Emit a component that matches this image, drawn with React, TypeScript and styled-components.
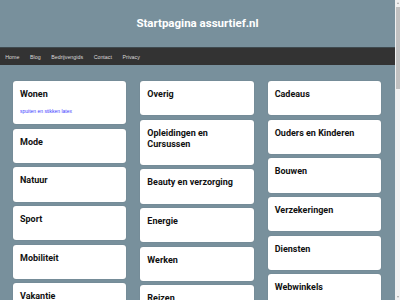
import React from 'react';
import styled, { createGlobalStyle } from 'styled-components';

const GlobalStyle = createGlobalStyle`
    body {
        margin: 0;
        padding-right: 5px;
        background: #78909c;
        font-family: Roboto, "Liberation Sans", Arial, sans-serif;
    }
`;

// nagebootste scrollbalk rechts (headless toont er geen)
const ScrollTrack = styled.div`
    position: fixed;
    top: 0;
    right: 0;
    width: 5px;
    height: 100vh;
    background: #f1f1f1;
    display: flex;
    flex-direction: column;
    align-items: center;
`;

const ScrollArrow = styled.div<{ $down?: boolean }>`
    width: 0;
    height: 0;
    margin: 2px 0;
    border-left: 1.5px solid transparent;
    border-right: 1.5px solid transparent;
    ${({ $down }) => ($down ? 'border-top: 2px solid #a3a3a3;' : 'border-bottom: 2px solid #a3a3a3;')}
`;

const ScrollThumb = styled.div`
    width: 4px;
    height: 82px;
    margin-top: 1px;
    background: #c1c1c1;
`;

const Spacer = styled.div`
    flex: 1;
`;

const Header = styled.header`
    height: 47px;
    display: flex;
    align-items: center;
    justify-content: center;
    background: #78909c;
`;

const Title = styled.h1`
    margin: 0;
    color: #fff;
    font-size: 11.5px;
    font-weight: 700;
    line-height: 1;
`;

const NavBar = styled.nav`
    height: 18px;
    display: flex;
    align-items: center;
    background: #333;
    border-top: 1px solid #3f4a4f;
    box-sizing: border-box;
`;

const NavLink = styled.a`
    padding: 0 5.3px;
    color: #d9d9d9;
    font-family: "Liberation Sans", Arial, sans-serif;
    font-size: 5.3px;
    text-decoration: none;
`;

const Grid = styled.main`
    display: grid;
    grid-template-columns: repeat(3, 1fr);
    column-gap: 14px;
    padding: 16px 14px 40px 13px;
    align-items: start;
`;

const Column = styled.div`
    display: flex;
    flex-direction: column;
    gap: 4.3px;
`;

const Card = styled.section`
    background: #fff;
    border-radius: 3px;
    box-shadow: 0 0 1px rgba(0, 0, 0, 0.25);
    padding: 8px 7px 9.4px;
`;

const CardTitle = styled.h2`
    margin: 0 0 6px;
    color: #111;
    font-size: 9px;
    font-weight: 700;
    line-height: 11px;
`;

const LinkList = styled.ul`
    list-style: none;
    margin: 0;
    padding: 2px 0 0;
`;

const LinkItem = styled.li`
    font-family: "Liberation Sans", Arial, sans-serif;
    font-size: 5px;
    line-height: 7px;
    a {
        color: #3b3bff;
        text-decoration: none;
    }
`;

type Category = { title: string; links?: string[] };

const columns: Category[][] = [
    [
        { title: 'Wonen', links: ['spuiten en stikken latex'] },
        { title: 'Mode' },
        { title: 'Natuur' },
        { title: 'Sport' },
        { title: 'Mobiliteit' },
        { title: 'Vakantie' },
    ],
    [
        { title: 'Overig' },
        { title: 'Opleidingen en Cursussen' },
        { title: 'Beauty en verzorging' },
        { title: 'Energie' },
        { title: 'Werken' },
        { title: 'Reizen' },
    ],
    [
        { title: 'Cadeaus' },
        { title: 'Ouders en Kinderen' },
        { title: 'Bouwen' },
        { title: 'Verzekeringen' },
        { title: 'Diensten' },
        { title: 'Webwinkels' },
    ],
];

const menu = ['Home', 'Blog', 'Bedrijvengids', 'Contact', 'Privacy'];

const App = () => {
    return (
        <>
            <GlobalStyle />
            <Header>
                <Title>Startpagina assurtief.nl</Title>
            </Header>
            <NavBar>
                {menu.map((item) => (
                    <NavLink key={item} href="#">{item}</NavLink>
                ))}
            </NavBar>
            <Grid>
                {columns.map((col, i) => (
                    <Column key={i}>
                        {col.map((cat) => (
                            <Card key={cat.title}>
                                <CardTitle>{cat.title}</CardTitle>
                                {cat.links && (
                                    <LinkList>
                                        {cat.links.map((l) => (
                                            <LinkItem key={l}><a href="#">{l}</a></LinkItem>
                                        ))}
                                    </LinkList>
                                )}
                            </Card>
                        ))}
                    </Column>
                ))}
            </Grid>
            <ScrollTrack>
                <ScrollArrow />
                <ScrollThumb />
                <Spacer />
                <ScrollArrow $down />
            </ScrollTrack>
        </>
    );
};

export default App;
